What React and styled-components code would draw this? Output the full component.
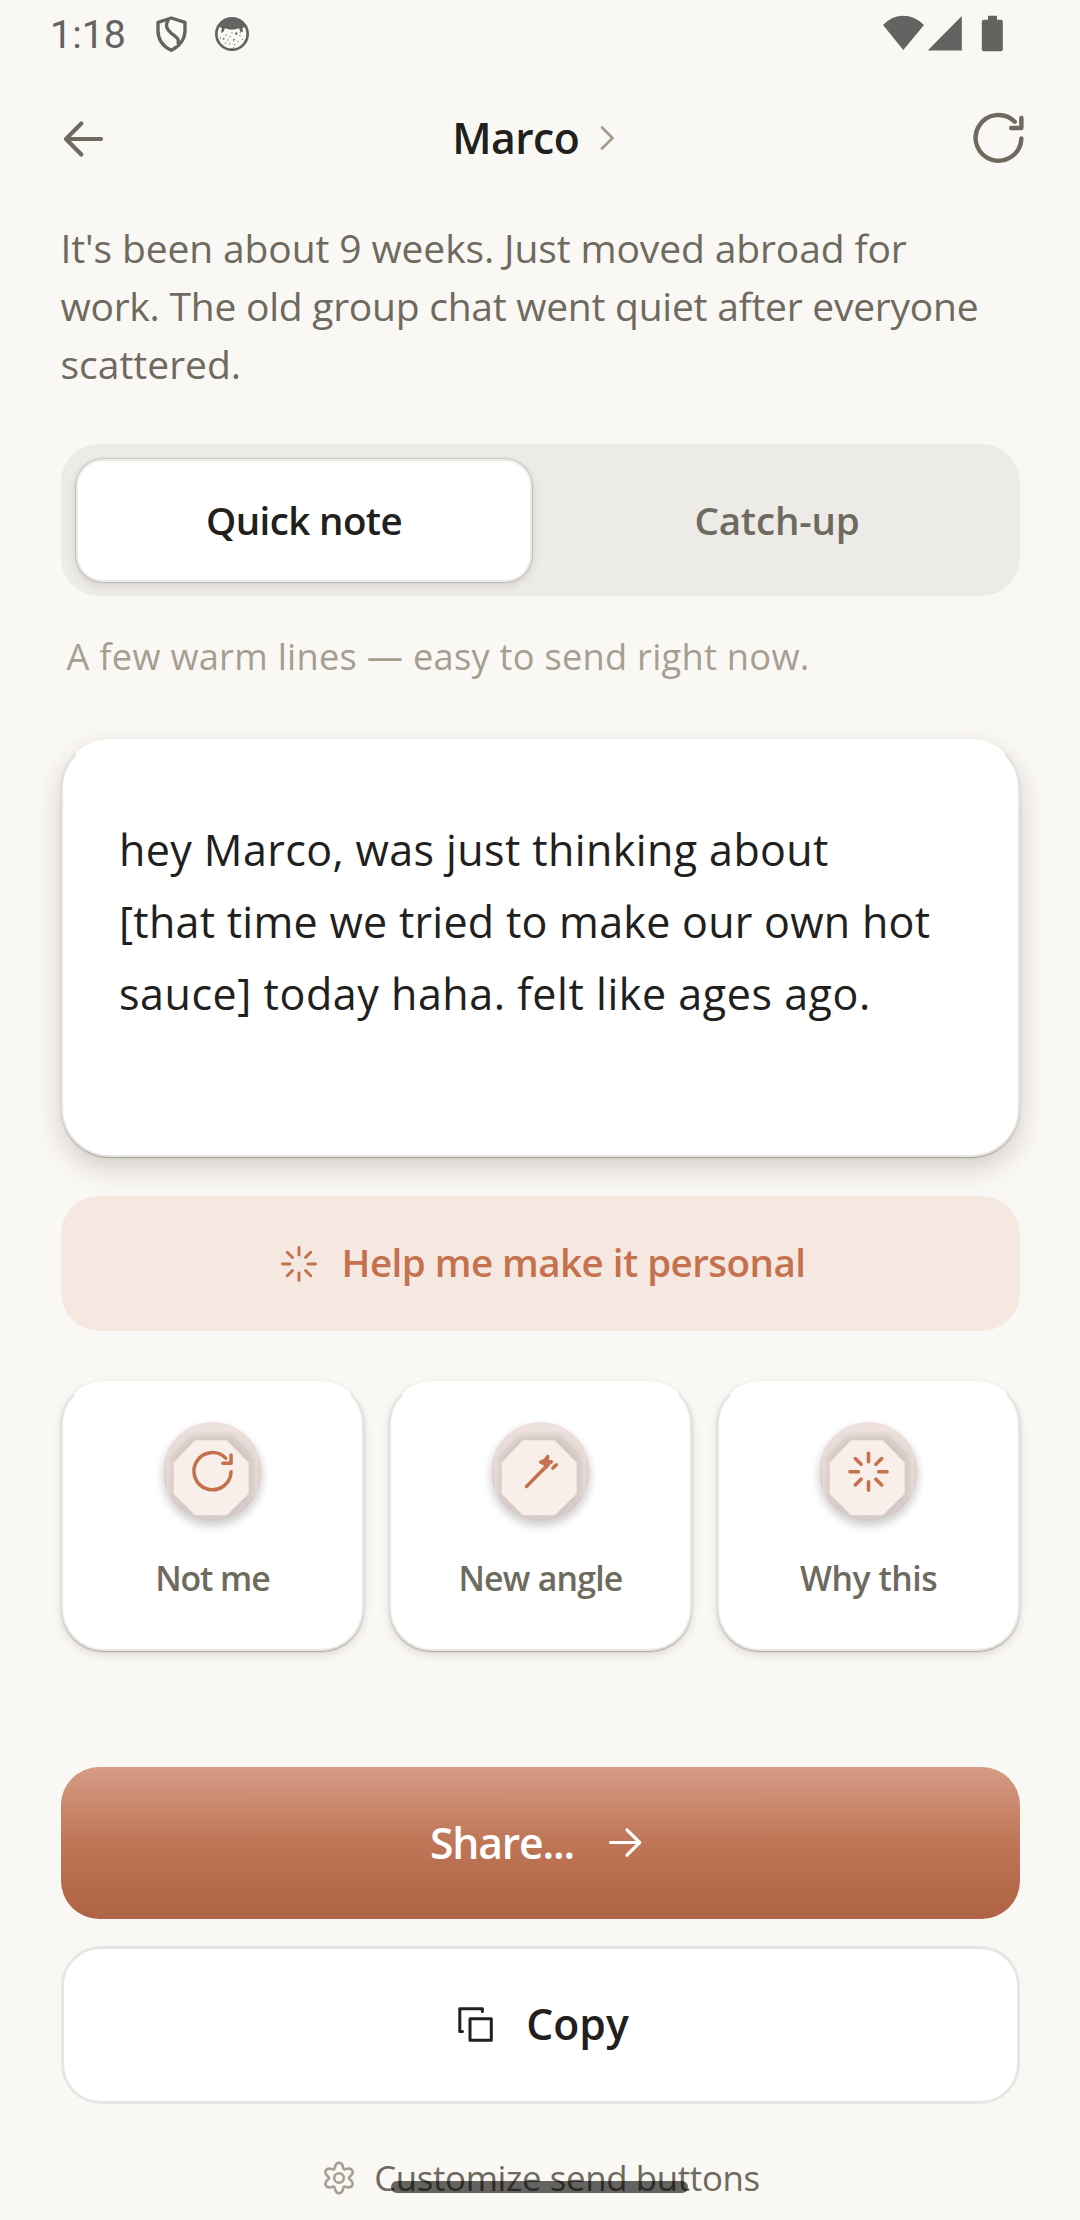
import React from "react";
import styled, { createGlobalStyle } from "styled-components";

const ink = "#21201c";
const olive = "#6e6a5e";
const sand = "#a59f91";
const clay = "#c6714d";
const paper = "#faf8f4";

const GlobalStyle = createGlobalStyle`
  *, *::before, *::after { box-sizing: border-box; }
  body { margin: 0; background: ${paper}; }
  button { font: inherit; color: inherit; border: 0; margin: 0; padding: 0; background: none; }
  svg { display: block; flex: none; overflow: visible; }
`;

const Screen = styled.div`
  position: relative;
  width: 1080px;
  height: 2220px;
  overflow: hidden;
  display: flex;
  flex-direction: column;
  background: ${paper};
  color: ${ink};
  font-family: "Open Sans", "Noto Sans", sans-serif;
`;

const StatusBar = styled.header`
  display: flex;
  align-items: center;
  height: 69px;
  padding: 0 77px 0 50px;
  color: #646361;
`;

const Clock = styled.span`
  width: 105px;
  font: 400 39.4px/69px Roboto, sans-serif;
`;

const StatusGroup = styled.div`
  display: flex;
  align-items: flex-start;
  height: 40px;
  gap: ${(p) => p.$gap}px;
  margin-left: ${(p) => (p.$end ? "auto" : "0")};
`;

const TopBar = styled.nav`
  display: flex;
  align-items: center;
  height: 139px;
  padding: 0 51.5px 0 61px;
  color: ${olive};
`;

const TitleButton = styled.button`
  flex: 1;
  display: flex;
  justify-content: center;
  align-items: center;
  gap: 21px;
  padding-right: 6px;
  color: ${sand};
`;

const Title = styled.span`
  margin-top: -1px;
  font-size: 42.7px;
  line-height: 60px;
  font-weight: 600;
  letter-spacing: -0.6px;
  color: ${ink};
`;

const Content = styled.main`
  display: flex;
  flex-direction: column;
  padding: 11px 60px 0 61px;
`;

const Line = styled.span`
  display: block;
  white-space: nowrap;
  letter-spacing: ${(p) => p.$ls || 0}px;
`;

const Context = styled.p`
  margin: 0 0 51px -0.5px;
  font-size: 39px;
  line-height: 58px;
  color: ${olive};
`;

const Segmented = styled.div`
  display: grid;
  grid-template-columns: 456px 1fr;
  gap: 16px;
  height: 152px;
  padding: 15px 14px 14px 15px;
  border-radius: 38px;
  background: #edebe7;
`;

const Segment = styled.button`
  display: flex;
  align-items: center;
  justify-content: center;
  padding-bottom: 2px;
  border-radius: 27px;
  font-size: 38.5px;
  font-weight: 600;
  letter-spacing: ${(p) => p.$ls}px;
  color: ${(p) => (p.$active ? ink : olive)};
  background: ${(p) => (p.$active ? "#fff" : "transparent")};
  border: ${(p) => (p.$active ? "2px solid #ebebea" : "0")};
  box-shadow: ${(p) =>
    p.$active ? "0 0 1px 1px rgba(60, 50, 40, 0.18), 0 3px 9px rgba(60, 40, 25, 0.14)" : "none"};
`;

const Hint = styled.p`
  margin: 35px 0 58px;
  padding-left: 5.5px;
  font-size: 36.2px;
  line-height: 50px;
  letter-spacing: 0.28px;
  white-space: nowrap;
  color: ${sand};
`;

const MessageCard = styled.section`
  height: 417.5px;
  padding: 72.5px 0 0 56px;
  border: 2.5px solid #e6e5e4;
  border-top-color: #fff;
  border-radius: 49px;
  background: #fff;
  font-size: 43px;
  line-height: 72px;
  box-shadow: 0 1px 1.5px rgba(40, 30, 20, 0.3), 0 11px 26px rgba(60, 40, 25, 0.2);
`;

const Personalize = styled.button`
  display: flex;
  align-items: center;
  justify-content: center;
  gap: 20px;
  height: 135px;
  margin-top: 39.5px;
  padding-left: 2px;
  border-radius: 38px;
  background: #f5e8e1;
  color: ${clay};
  font-size: 38.5px;
  line-height: 60px;
  font-weight: 600;
  letter-spacing: -0.52px;
`;

const PersonalizeLabel = styled.span`
  margin-top: -3px;
`;

const Tools = styled.div`
  display: grid;
  grid-template-columns: repeat(3, 1fr);
  gap: 25.5px;
  height: 270px;
  margin-top: 50px;
`;

const Tool = styled.button`
  display: flex;
  flex-direction: column;
  align-items: center;
  padding-top: 39px;
  border: 2.5px solid #e8e7e6;
  border-top-color: #fff;
  border-radius: 43px;
  background: #fff;
  box-shadow: 0 1px 1.5px rgba(40, 30, 20, 0.3), 0 4px 9px rgba(60, 40, 25, 0.14);
`;

const Disc = styled.span`
  width: 99px;
  height: 99px;
  border-radius: 50%;
  color: ${clay};
  box-shadow: 0 5px 10px rgba(30, 20, 30, 0.22);
`;

const ToolLabel = styled.span`
  margin-top: 33.5px;
  font-size: 33.8px;
  line-height: 46px;
  font-weight: 600;
  letter-spacing: ${(p) => p.$ls}px;
  color: ${olive};
`;

const ShareButton = styled.button`
  display: flex;
  align-items: center;
  justify-content: center;
  gap: 29px;
  height: 152px;
  margin-top: 116px;
  padding-right: 4px;
  border-radius: 38px;
  color: #fff;
  background: linear-gradient(180deg, #d69c84 0%, #d0917a 14%, #c78365 32%, #c07859 46%, #b96f50 66%, #b36848 84%, #af6545 100%);
`;

const CopyButton = styled.button`
  display: flex;
  align-items: center;
  justify-content: center;
  gap: 33px;
  height: 157.5px;
  margin-top: 27px;
  padding-left: 6px;
  border: 3px solid #e7e6e4;
  border-radius: 40px;
  background: #fff;
`;

const ActionLabel = styled.span`
  margin-top: ${(p) => p.$shift}px;
  font-size: 42.7px;
  line-height: 60px;
  font-weight: 600;
  letter-spacing: ${(p) => p.$ls}px;
`;

const Customize = styled.button`
  display: flex;
  align-items: center;
  justify-content: center;
  gap: 18px;
  height: 50px;
  margin-top: 49.5px;
  padding-left: 1px;
  font-size: 34.8px;
  line-height: 50px;
  letter-spacing: -0.35px;
  color: ${olive};
`;

const HomeIndicator = styled.div`
  position: absolute;
  left: 391px;
  bottom: 27px;
  width: 297px;
  height: 12px;
  border-radius: 6px;
  background: rgba(0, 0, 0, 0.6);
`;

const Stroke = ({ size, w, children, ...rest }) => (
  <svg
    width={size}
    height={size}
    viewBox="0 0 24 24"
    fill="none"
    stroke="currentColor"
    strokeWidth={w}
    strokeLinecap="round"
    strokeLinejoin="round"
    {...rest}
  >
    {children}
  </svg>
);

const Refresh = (p) => (
  <Stroke {...p}>
    <path d="M21 12a9 9 0 1 1-2.6-6.6" />
    <path d="M21 3.9v4h-4" />
  </Stroke>
);

const Spark = (p) => (
  <Stroke {...p}>
    <path d="M12 3v4.1M12 16.9V21M3 12h4.1M16.9 12H21M5.6 5.6l2.8 2.8M15.6 15.6l2.8 2.8M18.4 5.6l-2.8 2.8M8.4 15.6l-2.8 2.8" />
  </Stroke>
);

const Wand = (p) => (
  <Stroke {...p}>
    <path d="M5.2 19.1L15.200 9" />
    <path d="M15.500 4.600L14.300 6.300L12.100 7.300L13.900 8L14.800 9.700L15.800 8.200L17.300 7.200L15.300 6.400Z" fill="currentColor" />
    <path d="M18 10.2L19.7 8.6" />
  </Stroke>
);

const gearPath = (() => {
  const pts = [];
  for (let i = 0; i < 120; i++) {
    const a = (i / 120) * Math.PI * 2;
    const r = 12.9 + 2.6 * Math.cos(6 * a) - 0.3 * Math.cos(12 * a);
    pts.push(`${(17 + r * Math.sin(a)).toFixed(2)} ${(17 - r * Math.cos(a)).toFixed(2)}`);
  }
  return `M${pts.join("L")}Z`;
})();

const Gear = () => (
  <svg width="34" height="34" viewBox="0 0 34 34" fill="none" stroke={sand} strokeWidth="2.6" strokeLinejoin="round">
    <path d={gearPath} />
    <circle cx="17" cy="17" r="4.8" />
  </svg>
);

const Medallion = ({ id, children }) => (
  <Disc>
    <svg width="99" height="99" viewBox="0 0 99 99">
      <defs>
        <clipPath id={`${id}-clip`}>
          <circle cx="49.5" cy="49.5" r="49.5" />
        </clipPath>
        <linearGradient id={`${id}-rim`} x1="0" y1="0" x2="0" y2="1">
          <stop offset="0" stopColor="#efe2de" />
          <stop offset="0.5" stopColor="#e2d6d2" />
          <stop offset="1" stopColor="#d3c7c3" />
        </linearGradient>
        <filter id={`${id}-soft`} x="-30%" y="-30%" width="160%" height="160%">
          <feGaussianBlur stdDeviation="3.6" />
        </filter>
      </defs>
      <g clipPath={`url(#${id}-clip)`}>
        <rect width="99" height="99" fill={`url(#${id}-rim)`} />
        <path d="M30 4.5H69L95 31V70L69 97H30L4 70V31Z" fill="#f1e5e1" opacity="0.5" />
        <path
          d="M29 13H70L91 34V74L70 98H29L8 74V34Z"
          fill="#d3c8c4"
          filter={`url(#${id}-soft)`}
        />
      </g>
      <path d="M32 18.2H63.7L85.7 40.4V71.8L63.7 93.2H32L10.7 71.8V40.4Z" fill="#f8eeea" />
      <g transform="translate(24.75 25)">{children}</g>
    </svg>
  </Disc>
);

const Shield = () => (
  <svg width="33.3" height="36.7" viewBox="30 28 100 110" fill="none" stroke="currentColor" strokeWidth="10" strokeLinejoin="round">
    <path d="M79 37L120 50V75C120 100 104 122 79 134C54 122 39 100 39 75V50Z" />
    <path d="M70 42C60 60 64 70 80 84C100 98 104 104 98 116" />
  </svg>
);

const dots = [
  [232, 80, 2], [244, 88, 2], [228, 97, 2], [237, 99, 3], [250, 103, 2], [262, 82, 2], [275, 84, 4],
  [286, 90, 2], [293, 101, 2], [268, 102, 3], [280, 107, 2], [255, 115, 2], [270, 117, 2], [243, 112, 2],
  [287, 80, 2], [256, 93, 2], [267, 125, 2],
];

const Face = () => (
  <svg width="38.3" height="36.7" viewBox="205 28 115 110" fill="none" stroke="currentColor">
    <circle cx="262" cy="85" r="47" strokeWidth="8" />
    <path d="M228 50Q262 24 296 50L303 62L293 68L295 78L288 79L283 68Q262 76 241 68L236 79L229 78L232 68L221 62Z" fill="currentColor" stroke="none" />
    {dots.map(([x, y, r]) => (
      <circle key={`${x}-${y}`} cx={x} cy={y} r={r} fill="currentColor" stroke="none" opacity="0.85" />
    ))}
  </svg>
);

export default function App() {
  return (
    <>
      <GlobalStyle />
      <Screen>
        <StatusBar>
          <Clock>1:18</Clock>
          <StatusGroup $gap={25}>
            <Shield />
            <Face />
          </StatusGroup>
          <StatusGroup $end $gap={0}>
            <svg width="120" height="40" viewBox="883 14.5 120 40" fill="currentColor">
              <path d="M903.3 49.5L883 24.4Q892 15.2 903.3 15.2T924 24.4Z" />
              <path d="M961.8 15.5V50H927.7Z" />
              <path d="M988 15.2h9v4h3.8a2 2 0 0 1 2 2v27.5a2 2 0 0 1-2 2h-17a2 2 0 0 1-2-2V21.2a2 2 0 0 1 2-2h4.2Z" />
            </svg>
          </StatusGroup>
        </StatusBar>

        <TopBar>
          <svg width="44" height="44" viewBox="0 0 44 44" fill="none" stroke="currentColor" strokeWidth="4.2" strokeLinecap="round" strokeLinejoin="round">
            <path d="M40 22H5M20.3 6.5L5 22L20.3 37.5" />
          </svg>
          <TitleButton>
            <Title>Marco</Title>
            <svg width="14" height="26" viewBox="0 0 14 26" fill="none" stroke="currentColor" strokeWidth="2.8" strokeLinecap="round" strokeLinejoin="round">
              <path d="M2 1.500L12.500 12L2 22.500" />
            </svg>
          </TitleButton>
          <Refresh size={61} w={1.75} />
        </TopBar>

        <Content>
          <Context>
            <Line $ls={-0.12}>It's been about 9 weeks. Just moved abroad for</Line>
            <Line $ls={-0.25}>work. The old group chat went quiet after everyone</Line>
            <Line $ls={0}>scattered.</Line>
          </Context>

          <Segmented>
            <Segment $active $ls={-0.6}>Quick note</Segment>
            <Segment $ls={-0.15}>Catch-up</Segment>
          </Segmented>

          <Hint>A few warm lines — easy to send right now.</Hint>

          <MessageCard>
            <Line $ls={0.4}>hey Marco, was just thinking about</Line>
            <Line $ls={0.27}>[that time we tried to make our own hot</Line>
            <Line $ls={0.55}>sauce] today haha. felt like ages ago.</Line>
          </MessageCard>

          <Personalize>
            <Spark size={44} w={1.6} />
            <PersonalizeLabel>Help me make it personal</PersonalizeLabel>
          </Personalize>

          <Tools>
            <Tool>
              <Medallion id="retry">
                <Refresh size={49.5} w={1.7} />
              </Medallion>
              <ToolLabel $ls={-1.1}>Not me</ToolLabel>
            </Tool>
            <Tool>
              <Medallion id="angle">
                <Wand size={49.5} w={1.7} />
              </Medallion>
              <ToolLabel $ls={-0.76}>New angle</ToolLabel>
            </Tool>
            <Tool>
              <Medallion id="why">
                <Spark size={49.5} w={1.75} />
              </Medallion>
              <ToolLabel $ls={-0.46}>Why this</ToolLabel>
            </Tool>
          </Tools>

          <ShareButton>
            <ActionLabel $ls={-1.2} $shift={-1}>Share...</ActionLabel>
            <svg width="44" height="44" viewBox="0 0 44 44" fill="none" stroke="currentColor" strokeWidth="3.2" strokeLinecap="round" strokeLinejoin="round">
              <path d="M7.5 21.5H36.5M24 8.8L36.7 21.5L24 34.2" />
            </svg>
          </ShareButton>

          <CopyButton>
            <svg width="35" height="35" viewBox="0 0 35 35" fill="none" stroke="currentColor" strokeWidth="3" strokeLinecap="round" strokeLinejoin="round">
              <path d="M12 11.8H33.3V33.2H12Z" />
              <path d="M24.4 4.5V1.8H1.8V24.5H4.5" />
            </svg>
            <ActionLabel $ls={0} $shift={-2}>Copy</ActionLabel>
          </CopyButton>

          <Customize>
            <Gear />
            Customize send buttons
          </Customize>
        </Content>

        <HomeIndicator />
      </Screen>
    </>
  );
}
